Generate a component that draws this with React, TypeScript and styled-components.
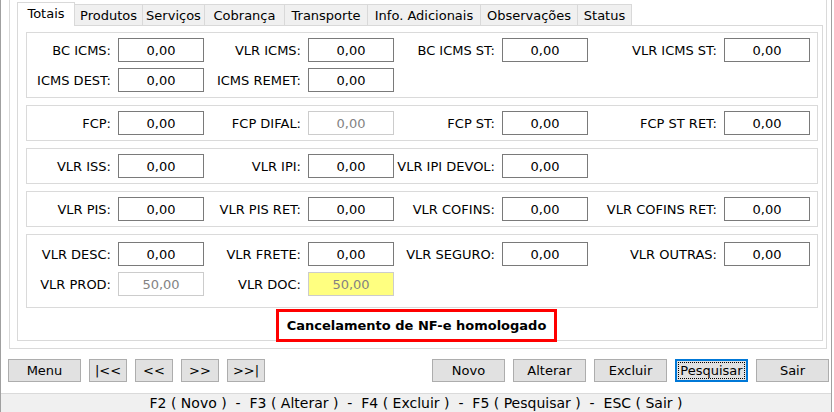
import React from "react";
import styled, { createGlobalStyle, css } from "styled-components";

const GlobalStyle = createGlobalStyle`
  html, body { margin: 0; padding: 0; background: #ffffff; }
  body { font-family: "DejaVu Sans", "Liberation Sans", sans-serif; font-size: 13px; color: #000; }
  * { box-sizing: border-box; }
`;

const Window = styled.div`
  width: 832px;
  height: 412px;
  display: flex;
  flex-direction: column;
  border-left: 1px solid #a0a0a0;
  border-right: 1px solid #a0a0a0;
  background: #ffffff;
  overflow: hidden;
`;

const Frame = styled.div`
  margin: 0 4px 0 8px;
  padding: 0 3px 7px 7px;
  border: 1px solid #dadada;
  border-top: none;
`;

const TabStrip = styled.div`
  display: flex;
  align-items: flex-end;
  height: 25px;
`;

const Tab = styled.div<{ $w: number; $active?: boolean }>`
  width: ${(p) => p.$w}px;
  display: flex;
  align-items: center;
  justify-content: center;
  white-space: nowrap;
  border-top: 1px solid #d9d9d9;
  border-right: 1px solid #d9d9d9;
  ${(p) =>
    p.$active
      ? css`
          height: 24px;
          margin-bottom: -1px;
          border-left: 1px solid #d9d9d9;
          background: #ffffff;
          position: relative;
          z-index: 1;
          padding-bottom: 2px;
        `
      : css`
          height: 21px;
          background: #f0f0f0;
        `}
`;

const Page = styled.div`
  border: 1px solid #d9d9d9;
  padding: 6px 4px 0 8px;
  display: flex;
  flex-direction: column;
  background: #ffffff;
`;

const GroupStack = styled.div`
  display: flex;
  flex-direction: column;
  gap: 7px;
`;

const GroupBox = styled.div<{ $padTop: number; $padBottom: number }>`
  border: 1px solid #dadada;
  padding: ${(p) => p.$padTop}px 0 ${(p) => p.$padBottom}px 0;
  display: grid;
  grid-template-columns: 91px 86px 104px 86px 108px 86px 136px 86px;
  grid-auto-rows: 24px;
  row-gap: 6px;
`;

const Label = styled.div`
  display: flex;
  align-items: center;
  justify-content: flex-end;
  padding-right: 7px;
  white-space: nowrap;
`;

const Field = styled.input<{ $variant?: "normal" | "disabled" | "highlight" }>`
  width: 86px;
  height: 24px;
  margin: 0;
  padding: 0;
  text-align: center;
  font: inherit;
  font-size: 13px;
  outline: none;
  border: 1px solid #7a7a7a;
  background: #ffffff;
  color: #000000;
  ${(p) =>
    p.$variant === "disabled" &&
    css`
      border-color: #cccccc;
      color: #838383;
    `}
  ${(p) =>
    p.$variant === "highlight" &&
    css`
      border-color: #cccccc;
      background: #ffff80;
      color: #838383;
    `}
`;

const Notice = styled.div`
  position: relative;
  z-index: 1;
  width: 281px;
  height: 33px;
  margin: 1px 0 -2px 250px;
  border: 3px solid #ff0000;
  background: #ffffff;
  display: flex;
  align-items: center;
  justify-content: center;
  font-weight: bold;
  white-space: nowrap;
`;

const ButtonBar = styled.div`
  margin-top: 10px;
  padding: 0 2px 0 7px;
  display: flex;
  justify-content: space-between;
`;

const ButtonGroup = styled.div`
  display: flex;
  gap: 8px;
`;

const Button = styled.button<{ $w: number; $focused?: boolean }>`
  position: relative;
  width: ${(p) => p.$w}px;
  height: 23px;
  margin: 0;
  padding: 0;
  font: inherit;
  font-size: 13px;
  color: #000;
  background: #e1e1e1;
  border: 1px solid #adadad;
  display: flex;
  align-items: center;
  justify-content: center;
  white-space: nowrap;
  ${(p) =>
    p.$focused &&
    css`
      border: 2px solid #0078d7;
      &::after {
        content: "";
        position: absolute;
        inset: 1px;
        border: 1px dotted #000;
      }
    `}
`;

const StatusBar = styled.div`
  margin-top: auto;
  height: 19px;
  border-top: 1px solid #dadada;
  background: #f0f0f0;
  display: flex;
  align-items: center;
  justify-content: center;
  white-space: pre;
  font-size: 14px;
`;

type F = { label: string; value?: string; variant?: "normal" | "disabled" | "highlight" };

const groups: { rows: F[]; padTop: number; padBottom: number }[] = [
  {
    padTop: 5,
    padBottom: 5,
    rows: [
      { label: "BC ICMS:" },
      { label: "VLR ICMS:" },
      { label: "BC ICMS ST:" },
      { label: "VLR ICMS ST:" },
      { label: "ICMS DEST:" },
      { label: "ICMS REMET:" },
    ],
  },
  {
    padTop: 5,
    padBottom: 5,
    rows: [
      { label: "FCP:" },
      { label: "FCP DIFAL:", variant: "disabled" },
      { label: "FCP ST:" },
      { label: "FCP ST RET:" },
    ],
  },
  {
    padTop: 5,
    padBottom: 5,
    rows: [{ label: "VLR ISS:" }, { label: "VLR IPI:" }, { label: "VLR IPI DEVOL:" }],
  },
  {
    padTop: 5,
    padBottom: 5,
    rows: [
      { label: "VLR PIS:" },
      { label: "VLR PIS RET:" },
      { label: "VLR COFINS:" },
      { label: "VLR COFINS RET:" },
    ],
  },
  {
    padTop: 7,
    padBottom: 11,
    rows: [
      { label: "VLR DESC:" },
      { label: "VLR FRETE:" },
      { label: "VLR SEGURO:" },
      { label: "VLR OUTRAS:" },
      { label: "VLR PROD:", value: "50,00", variant: "disabled" },
      { label: "VLR DOC:", value: "50,00", variant: "highlight" },
    ],
  },
];

const tabs: { name: string; w: number }[] = [
  { name: "Totais", w: 58 },
  { name: "Produtos", w: 68 },
  { name: "Serviços", w: 62 },
  { name: "Cobrança", w: 80 },
  { name: "Transporte", w: 83 },
  { name: "Info. Adicionais", w: 113 },
  { name: "Observações", w: 97 },
  { name: "Status", w: 54 },
];

export default function App() {
  return (
    <>
      <GlobalStyle />
      <Window>
        <Frame>
          <TabStrip>
            {tabs.map((t, i) => (
              <Tab key={t.name} $w={t.w} $active={i === 0}>
                {t.name}
              </Tab>
            ))}
          </TabStrip>
          <Page>
            <GroupStack>
              {groups.map((g, gi) => (
                <GroupBox key={gi} $padTop={g.padTop} $padBottom={g.padBottom}>
                  {g.rows.map((f) => (
                    <React.Fragment key={f.label}>
                      <Label>{f.label}</Label>
                      <Field readOnly value={f.value ?? "0,00"} $variant={f.variant ?? "normal"} />
                    </React.Fragment>
                  ))}
                </GroupBox>
              ))}
            </GroupStack>
            <Notice>Cancelamento de NF-e homologado</Notice>
          </Page>
        </Frame>
        <ButtonBar>
          <ButtonGroup>
            <Button $w={73}>Menu</Button>
            <Button $w={38}>|&lt;&lt;</Button>
            <Button $w={38}>&lt;&lt;</Button>
            <Button $w={38}>&gt;&gt;</Button>
            <Button $w={38}>&gt;&gt;|</Button>
          </ButtonGroup>
          <ButtonGroup>
            <Button $w={73}>Novo</Button>
            <Button $w={73}>Alterar</Button>
            <Button $w={73}>Excluir</Button>
            <Button $w={73} $focused>
              Pesquisar
            </Button>
            <Button $w={73}>Sair</Button>
          </ButtonGroup>
        </ButtonBar>
        <StatusBar>{"F2 ( Novo )  -  F3 ( Alterar )  -  F4 ( Excluir )  -  F5 ( Pesquisar )  -  ESC ( Sair )"}</StatusBar>
      </Window>
    </>
  );
}
